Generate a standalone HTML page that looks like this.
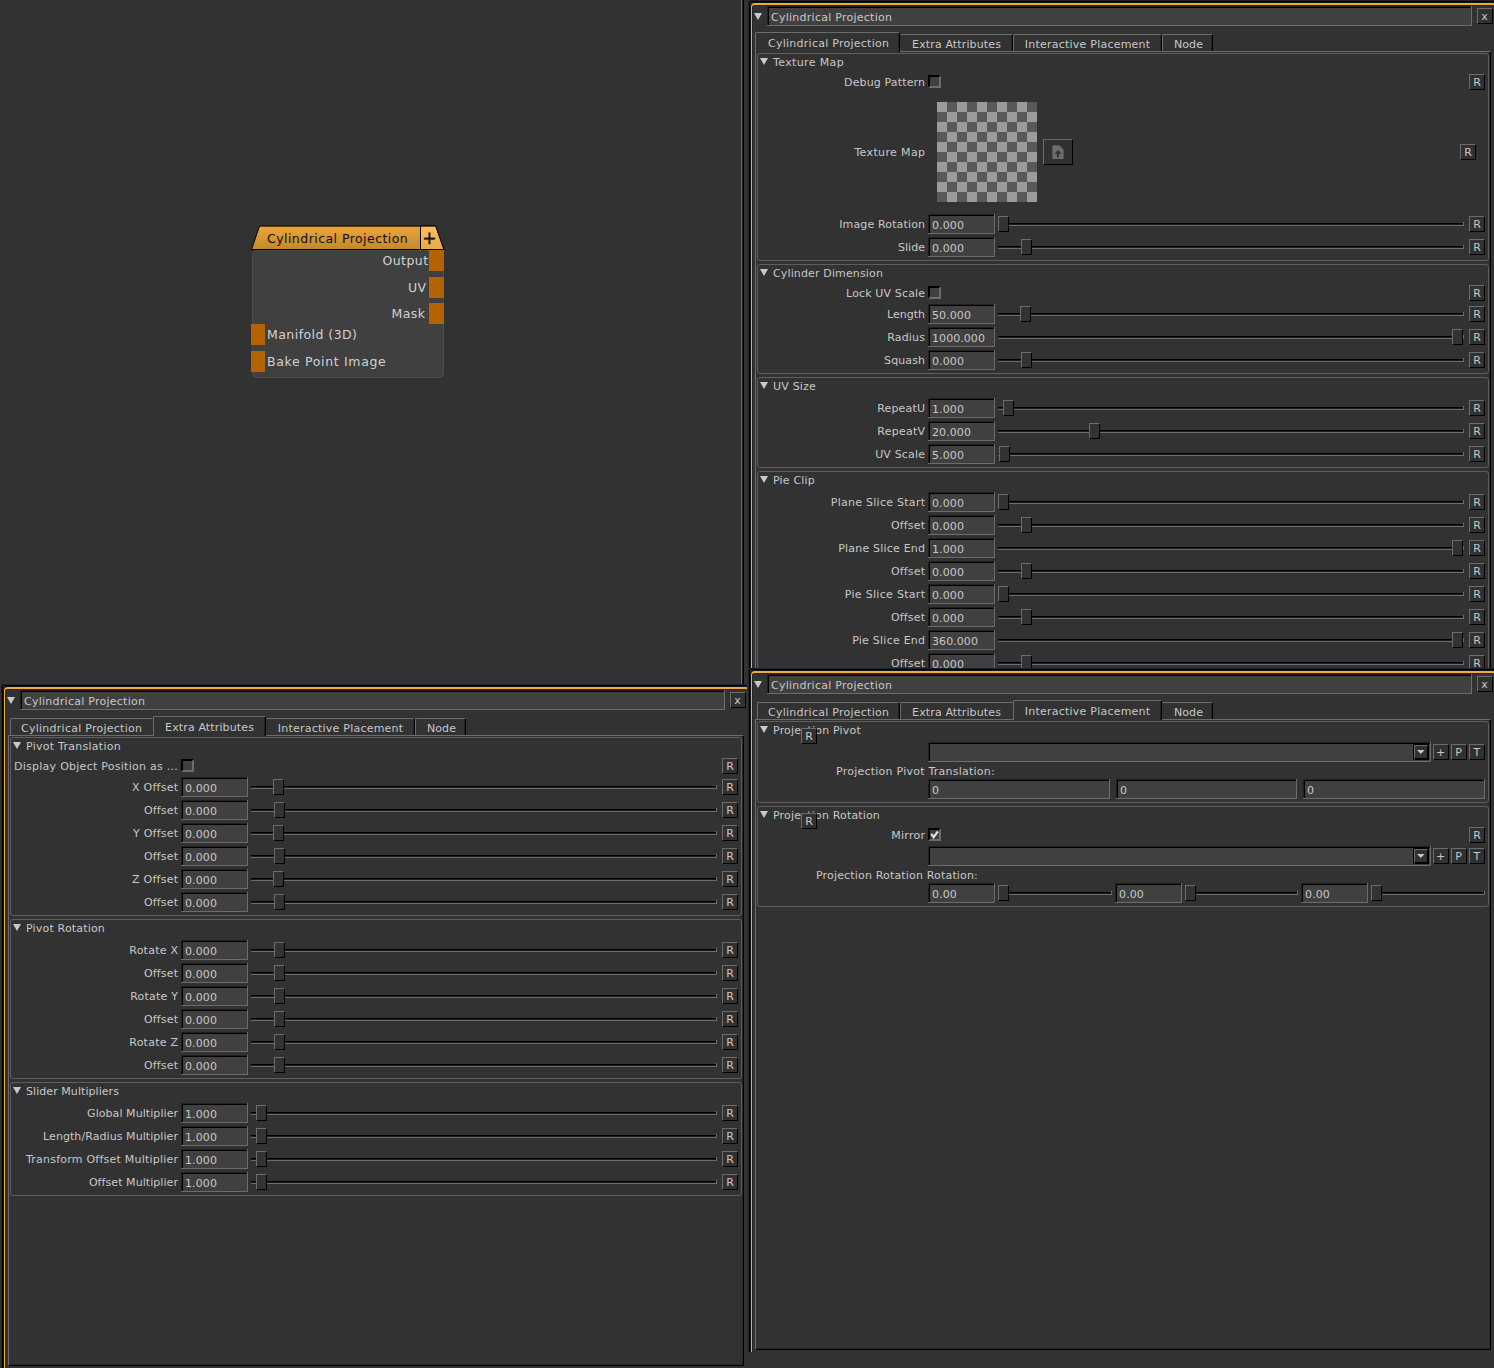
<!DOCTYPE html>
<html><head><meta charset="utf-8"><title>Cylindrical Projection</title>
<style>
html,body{margin:0;padding:0;background:#323232;}
body{width:1494px;height:1368px;position:relative;overflow:hidden;font-family:"DejaVu Sans","Liberation Sans",sans-serif;font-size:11px;color:#c8c8c8;}
div,svg{position:absolute;box-sizing:content-box;}
.t{white-space:nowrap;line-height:14px;height:14px;font-size:11px;color:#c8c8c8;}
.r{width:300px;text-align:right;}
.c{width:300px;text-align:center;}
.vp{overflow:hidden;}
.in{width:760px;height:1400px;}
.cb{width:9px;height:9px;background:#404040;border:2px solid;border-color:#000 #6c6c6c #6c6c6c #000;}
.f{background:#404040;border-top:1px solid #202020;border-left:1px solid #202020;box-shadow:inset 1px 1px 0 0 #000,1px 0 0 0 #6c6c6c,0 1px 0 0 #6c6c6c,1px 1px 0 0 #6c6c6c;}
.b{background:#313131;border-top:1px solid #6c6c6c;border-left:1px solid #6c6c6c;border-right:1px solid #000;border-bottom:1px solid #000;}
.h{width:9px;height:14px;background:#333;border-top:1px solid #6c6c6c;border-left:1px solid #6c6c6c;border-right:1px solid #000;border-bottom:1px solid #000;}

.g{border:1px solid #5e5e5e;border-radius:3px;}
.frameo{border:1px solid #000;border-radius:2px;box-shadow:0 0 0 1px #212121;}
.frame{border:solid #f3a93b;border-width:2px 1px 1px 1px;border-radius:4px;background:#323232;box-shadow:0 0 0 1px #10141c, inset 0 0 0 1px #23272f;}
.pane{border-top:1px solid #6c6c6c;border-left:1px solid #6c6c6c;border-right:1px solid #000;border-bottom:1px solid #000;box-shadow:inset -1px -1px 0 0 #272727;}
.tab{background:#323232;border-top:1px solid #6c6c6c;border-left:1px solid #6c6c6c;border-right:1px solid #000;border-radius:2px 2px 0 0;box-shadow:inset -1px 0 0 #242424;}
.tab.nl{border-left-color:transparent;border-top-left-radius:0;}
.tab.nr{border-right-color:transparent;box-shadow:none;border-top-right-radius:0;}
.tab.act{border-bottom:none;}
.nt{white-space:nowrap;line-height:16px;height:16px;font-size:12.5px;letter-spacing:0.45px;color:#d2d2d2;}
</style></head><body>

<div style="left:741px;top:0px;width:1px;height:684px;background:#6c6c6c;"></div>
<div style="left:742px;top:0px;width:1px;height:684px;background:#1a1a1a;"></div>
<div style="left:743px;top:0px;width:1px;height:684px;background:#000;"></div>
<svg style="left:245px;top:220px" width="210" height="165" viewBox="245 220 210 165"><defs><linearGradient id="ng" x1="0" y1="0" x2="0" y2="1"><stop offset="0" stop-color="#eaa63c"/><stop offset="1" stop-color="#c2892e"/></linearGradient><linearGradient id="ng2" x1="0" y1="0" x2="0" y2="1"><stop offset="0" stop-color="#fdc05a"/><stop offset="1" stop-color="#e6a94c"/></linearGradient></defs><rect x="252.5" y="250.5" width="191" height="127" rx="4" fill="#404040" stroke="#4b4b4b"/><path d="M251.5 249.5L259.5 226.1H435.6L443.9 249.5Z" fill="url(#ng)" stroke="#000" stroke-width="1"/><path d="M420.5 226.1H435.6L443.9 249.5H420.5Z" fill="url(#ng2)" stroke="#000" stroke-width="1"/></svg>
<div style="left:429.4px;top:250px;width:14.4px;height:21px;background:#b56200;"></div>
<div style="left:429.4px;top:277px;width:14.4px;height:21px;background:#b56200;"></div>
<div style="left:429.4px;top:303px;width:14.4px;height:21px;background:#b56200;"></div>
<div style="left:251px;top:324px;width:14px;height:21px;background:#b56200;"></div>
<div style="left:251px;top:351px;width:14px;height:21px;background:#b56200;"></div>
<div class="nt" style="left:267px;top:230.5px;color:#140c00;">Cylindrical Projection</div>
<div class="nt" style="left:422.3px;top:227.8px;font-size:17px;line-height:20px;height:20px;letter-spacing:0;color:#111;-webkit-text-stroke:0.45px #111">+</div>
<div class="nt r" style="left:128.5px;top:253px;">Output</div>
<div class="nt r" style="left:126.5px;top:280px;">UV</div>
<div class="nt r" style="left:125.5px;top:306px;">Mask</div>
<div class="nt" style="left:267px;top:327px;">Manifold (3D)</div>
<div class="nt" style="left:267px;top:354px;color:#d2d2d2;letter-spacing:0.66px;">Bake Point Image</div>
<div class="vp" style="left:748px;top:0px;width:746px;height:668px"><div class="in" style="left:-748px;top:0px">
<div class="frameo" style="left:749px;top:1px;width:747px;height:1400px"></div>
<div class="frame" style="left:751px;top:3px;width:743px;height:1400px"></div>
<svg style="left:754px;top:13px" width="8" height="7" viewBox="0 0 8 7"><path d="M0 0H8L4.0 7Z" fill="#c9c9c9"/></svg>
<div class="f" style="left:767px;top:6px;width:703px;height:18px"></div>
<div class="t" style="left:771px;top:11px;letter-spacing:0.256px;">Cylindrical Projection</div>
<div class="b" style="left:1477px;top:8px;width:14px;height:14px"></div>
<div class="t c" style="left:1334.745px;top:10px;letter-spacing:0.49px;">x</div>
<div class="pane" style="left:755px;top:51px;width:734px;height:700px"></div>
<div class="tab act" style="left:755px;top:32px;width:143px;height:19px"></div>
<div class="t c" style="left:678.628px;top:37px;letter-spacing:0.256px;">Cylindrical Projection</div>
<div class="tab nl" style="left:900px;top:34px;width:111px;height:16px"></div>
<div class="t c" style="left:806.5675px;top:38px;letter-spacing:0.135px;">Extra Attributes</div>
<div class="tab" style="left:1013px;top:34px;width:147px;height:16px"></div>
<div class="t c" style="left:937.613px;top:38px;letter-spacing:0.226px;">Interactive Placement</div>
<div class="tab" style="left:1162px;top:34px;width:49px;height:16px"></div>
<div class="t c" style="left:1038.5365px;top:38px;letter-spacing:0.073px;">Node</div>
<div class="g" style="left:757px;top:53px;width:730px;height:206px"></div>
<svg style="left:760px;top:58px" width="8" height="7" viewBox="0 0 8 7"><path d="M0 0H8L4.0 7Z" fill="#c9c9c9"/></svg>
<div class="t" style="left:773px;top:56px;letter-spacing:0.364px;">Texture Map</div>
<div class="t r" style="left:625.135px;top:76px;letter-spacing:0.135px;">Debug Pattern</div>
<div class="cb" style="left:928px;top:75px"></div>
<div class="b" style="left:1469px;top:74px;width:14px;height:14px"></div>
<div class="t c" style="left:1327.1785px;top:76px;letter-spacing:0.357px;">R</div>
<div class="t r" style="left:625.364px;top:146px;letter-spacing:0.364px;">Texture Map</div>
<div style="left:937px;top:102px;width:100px;height:100px;background-color:#9b9b9b;background-image:conic-gradient(#595959 25%,#9b9b9b 0 50%,#595959 0 75%,#9b9b9b 0);background-size:20px 20px;background-position:0 0"></div>
<div class="b" style="left:1043px;top:139px;width:28px;height:24px"></div>
<svg style="left:1052px;top:145px" width="12" height="14" viewBox="0 0 12 14"><path d="M1.4 0.2H7.2L11.6 4.5V13.2Q11.6 14 10.8 14H1.2Q0.4 14 0.4 13.2V1Q0.4 0.2 1.4 0.2Z" fill="#6d6d6d"/><path d="M6 5L2.4 8.8H4.9V12.2H7.1V8.8H9.6Z" fill="#333"/></svg>
<div class="b" style="left:1460px;top:144px;width:14px;height:14px"></div>
<div class="t c" style="left:1318.1785px;top:146px;letter-spacing:0.357px;">R</div>
<div class="t r" style="left:625.146px;top:218px;letter-spacing:0.146px;">Image Rotation</div>
<div class="f" style="left:928px;top:214px;width:65px;height:18px"></div>
<div class="t" style="left:932px;top:219px;letter-spacing:0.102px;">0.000</div>
<div style="left:998px;top:223px;width:466px;height:1px;background:#000;"></div>
<div style="left:998px;top:224px;width:466px;height:1px;background:#1c1c1c;"></div>
<div style="left:998px;top:225px;width:466px;height:1px;background:#6c6c6c;"></div>
<div style="left:1463px;top:222px;width:1px;height:4px;background:#6c6c6c;"></div>
<div class="h" style="left:998px;top:216px"></div>
<div class="b" style="left:1469px;top:216px;width:14px;height:14px"></div>
<div class="t c" style="left:1327.1785px;top:218px;letter-spacing:0.357px;">R</div>
<div class="t r" style="left:625.031px;top:241px;letter-spacing:0.031px;">Slide</div>
<div class="f" style="left:928px;top:237px;width:65px;height:18px"></div>
<div class="t" style="left:932px;top:242px;letter-spacing:0.102px;">0.000</div>
<div style="left:998px;top:246px;width:466px;height:1px;background:#000;"></div>
<div style="left:998px;top:247px;width:466px;height:1px;background:#1c1c1c;"></div>
<div style="left:998px;top:248px;width:466px;height:1px;background:#6c6c6c;"></div>
<div style="left:1463px;top:245px;width:1px;height:4px;background:#6c6c6c;"></div>
<div class="h" style="left:1021px;top:239px"></div>
<div class="b" style="left:1469px;top:239px;width:14px;height:14px"></div>
<div class="t c" style="left:1327.1785px;top:241px;letter-spacing:0.357px;">R</div>
<div class="g" style="left:757px;top:264px;width:730px;height:108px"></div>
<svg style="left:760px;top:269px" width="8" height="7" viewBox="0 0 8 7"><path d="M0 0H8L4.0 7Z" fill="#c9c9c9"/></svg>
<div class="t" style="left:773px;top:267px;letter-spacing:0.138px;">Cylinder Dimension</div>
<div class="t r" style="left:625.135px;top:287px;letter-spacing:0.135px;">Lock UV Scale</div>
<div class="cb" style="left:928px;top:286px"></div>
<div class="b" style="left:1469px;top:285px;width:14px;height:14px"></div>
<div class="t c" style="left:1327.1785px;top:287px;letter-spacing:0.357px;">R</div>
<div class="t r" style="left:625.01px;top:308px;letter-spacing:0.01px;">Length</div>
<div class="f" style="left:928px;top:304px;width:65px;height:18px"></div>
<div class="t" style="left:932px;top:309px;letter-spacing:0.085px;">50.000</div>
<div style="left:998px;top:313px;width:466px;height:1px;background:#000;"></div>
<div style="left:998px;top:314px;width:466px;height:1px;background:#1c1c1c;"></div>
<div style="left:998px;top:315px;width:466px;height:1px;background:#6c6c6c;"></div>
<div style="left:1463px;top:312px;width:1px;height:4px;background:#6c6c6c;"></div>
<div class="h" style="left:1020px;top:306px"></div>
<div class="b" style="left:1469px;top:306px;width:14px;height:14px"></div>
<div class="t c" style="left:1327.1785px;top:308px;letter-spacing:0.357px;">R</div>
<div class="t r" style="left:625.186px;top:331px;letter-spacing:0.186px;">Radius</div>
<div class="f" style="left:928px;top:327px;width:65px;height:18px"></div>
<div class="t" style="left:932px;top:332px;letter-spacing:0.064px;">1000.000</div>
<div style="left:998px;top:336px;width:466px;height:1px;background:#000;"></div>
<div style="left:998px;top:337px;width:466px;height:1px;background:#1c1c1c;"></div>
<div style="left:998px;top:338px;width:466px;height:1px;background:#6c6c6c;"></div>
<div style="left:1463px;top:335px;width:1px;height:4px;background:#6c6c6c;"></div>
<div class="h" style="left:1452px;top:329px"></div>
<div class="b" style="left:1469px;top:329px;width:14px;height:14px"></div>
<div class="t c" style="left:1327.1785px;top:331px;letter-spacing:0.357px;">R</div>
<div class="t r" style="left:625.103px;top:354px;letter-spacing:0.103px;">Squash</div>
<div class="f" style="left:928px;top:350px;width:65px;height:18px"></div>
<div class="t" style="left:932px;top:355px;letter-spacing:0.102px;">0.000</div>
<div style="left:998px;top:359px;width:466px;height:1px;background:#000;"></div>
<div style="left:998px;top:360px;width:466px;height:1px;background:#1c1c1c;"></div>
<div style="left:998px;top:361px;width:466px;height:1px;background:#6c6c6c;"></div>
<div style="left:1463px;top:358px;width:1px;height:4px;background:#6c6c6c;"></div>
<div class="h" style="left:1021px;top:352px"></div>
<div class="b" style="left:1469px;top:352px;width:14px;height:14px"></div>
<div class="t c" style="left:1327.1785px;top:354px;letter-spacing:0.357px;">R</div>
<div class="g" style="left:757px;top:377px;width:730px;height:89px"></div>
<svg style="left:760px;top:382px" width="8" height="7" viewBox="0 0 8 7"><path d="M0 0H8L4.0 7Z" fill="#c9c9c9"/></svg>
<div class="t" style="left:773px;top:380px;letter-spacing:0.192px;">UV Size</div>
<div class="t r" style="left:625.175px;top:402px;letter-spacing:0.175px;">RepeatU</div>
<div class="f" style="left:928px;top:398px;width:65px;height:18px"></div>
<div class="t" style="left:932px;top:403px;letter-spacing:0.102px;">1.000</div>
<div style="left:998px;top:407px;width:466px;height:1px;background:#000;"></div>
<div style="left:998px;top:408px;width:466px;height:1px;background:#1c1c1c;"></div>
<div style="left:998px;top:409px;width:466px;height:1px;background:#6c6c6c;"></div>
<div style="left:1463px;top:406px;width:1px;height:4px;background:#6c6c6c;"></div>
<div class="h" style="left:1003px;top:400px"></div>
<div class="b" style="left:1469px;top:400px;width:14px;height:14px"></div>
<div class="t c" style="left:1327.1785px;top:402px;letter-spacing:0.357px;">R</div>
<div class="t r" style="left:625.251px;top:425px;letter-spacing:0.251px;">RepeatV</div>
<div class="f" style="left:928px;top:421px;width:65px;height:18px"></div>
<div class="t" style="left:932px;top:426px;letter-spacing:0.085px;">20.000</div>
<div style="left:998px;top:430px;width:466px;height:1px;background:#000;"></div>
<div style="left:998px;top:431px;width:466px;height:1px;background:#1c1c1c;"></div>
<div style="left:998px;top:432px;width:466px;height:1px;background:#6c6c6c;"></div>
<div style="left:1463px;top:429px;width:1px;height:4px;background:#6c6c6c;"></div>
<div class="h" style="left:1089px;top:423px"></div>
<div class="b" style="left:1469px;top:423px;width:14px;height:14px"></div>
<div class="t c" style="left:1327.1785px;top:425px;letter-spacing:0.357px;">R</div>
<div class="t r" style="left:625.167px;top:448px;letter-spacing:0.167px;">UV Scale</div>
<div class="f" style="left:928px;top:444px;width:65px;height:18px"></div>
<div class="t" style="left:932px;top:449px;letter-spacing:0.102px;">5.000</div>
<div style="left:998px;top:453px;width:466px;height:1px;background:#000;"></div>
<div style="left:998px;top:454px;width:466px;height:1px;background:#1c1c1c;"></div>
<div style="left:998px;top:455px;width:466px;height:1px;background:#6c6c6c;"></div>
<div style="left:1463px;top:452px;width:1px;height:4px;background:#6c6c6c;"></div>
<div class="h" style="left:999px;top:446px"></div>
<div class="b" style="left:1469px;top:446px;width:14px;height:14px"></div>
<div class="t c" style="left:1327.1785px;top:448px;letter-spacing:0.357px;">R</div>
<div class="g" style="left:757px;top:471px;width:730px;height:228px"></div>
<svg style="left:760px;top:476px" width="8" height="7" viewBox="0 0 8 7"><path d="M0 0H8L4.0 7Z" fill="#c9c9c9"/></svg>
<div class="t" style="left:773px;top:474px;letter-spacing:0.189px;">Pie Clip</div>
<div class="t r" style="left:625.268px;top:496px;letter-spacing:0.268px;">Plane Slice Start</div>
<div class="f" style="left:928px;top:492px;width:65px;height:18px"></div>
<div class="t" style="left:932px;top:497px;letter-spacing:0.102px;">0.000</div>
<div style="left:998px;top:501px;width:466px;height:1px;background:#000;"></div>
<div style="left:998px;top:502px;width:466px;height:1px;background:#1c1c1c;"></div>
<div style="left:998px;top:503px;width:466px;height:1px;background:#6c6c6c;"></div>
<div style="left:1463px;top:500px;width:1px;height:4px;background:#6c6c6c;"></div>
<div class="h" style="left:998px;top:494px"></div>
<div class="b" style="left:1469px;top:494px;width:14px;height:14px"></div>
<div class="t c" style="left:1327.1785px;top:496px;letter-spacing:0.357px;">R</div>
<div class="t r" style="left:625.159px;top:519px;letter-spacing:0.159px;">Offset</div>
<div class="f" style="left:928px;top:515px;width:65px;height:18px"></div>
<div class="t" style="left:932px;top:520px;letter-spacing:0.102px;">0.000</div>
<div style="left:998px;top:524px;width:466px;height:1px;background:#000;"></div>
<div style="left:998px;top:525px;width:466px;height:1px;background:#1c1c1c;"></div>
<div style="left:998px;top:526px;width:466px;height:1px;background:#6c6c6c;"></div>
<div style="left:1463px;top:523px;width:1px;height:4px;background:#6c6c6c;"></div>
<div class="h" style="left:1021px;top:517px"></div>
<div class="b" style="left:1469px;top:517px;width:14px;height:14px"></div>
<div class="t c" style="left:1327.1785px;top:519px;letter-spacing:0.357px;">R</div>
<div class="t r" style="left:625.202px;top:542px;letter-spacing:0.202px;">Plane Slice End</div>
<div class="f" style="left:928px;top:538px;width:65px;height:18px"></div>
<div class="t" style="left:932px;top:543px;letter-spacing:0.102px;">1.000</div>
<div style="left:998px;top:547px;width:466px;height:1px;background:#000;"></div>
<div style="left:998px;top:548px;width:466px;height:1px;background:#1c1c1c;"></div>
<div style="left:998px;top:549px;width:466px;height:1px;background:#6c6c6c;"></div>
<div style="left:1463px;top:546px;width:1px;height:4px;background:#6c6c6c;"></div>
<div class="h" style="left:1452px;top:540px"></div>
<div class="b" style="left:1469px;top:540px;width:14px;height:14px"></div>
<div class="t c" style="left:1327.1785px;top:542px;letter-spacing:0.357px;">R</div>
<div class="t r" style="left:625.159px;top:565px;letter-spacing:0.159px;">Offset</div>
<div class="f" style="left:928px;top:561px;width:65px;height:18px"></div>
<div class="t" style="left:932px;top:566px;letter-spacing:0.102px;">0.000</div>
<div style="left:998px;top:570px;width:466px;height:1px;background:#000;"></div>
<div style="left:998px;top:571px;width:466px;height:1px;background:#1c1c1c;"></div>
<div style="left:998px;top:572px;width:466px;height:1px;background:#6c6c6c;"></div>
<div style="left:1463px;top:569px;width:1px;height:4px;background:#6c6c6c;"></div>
<div class="h" style="left:1021px;top:563px"></div>
<div class="b" style="left:1469px;top:563px;width:14px;height:14px"></div>
<div class="t c" style="left:1327.1785px;top:565px;letter-spacing:0.357px;">R</div>
<div class="t r" style="left:625.301px;top:588px;letter-spacing:0.301px;">Pie Slice Start</div>
<div class="f" style="left:928px;top:584px;width:65px;height:18px"></div>
<div class="t" style="left:932px;top:589px;letter-spacing:0.102px;">0.000</div>
<div style="left:998px;top:593px;width:466px;height:1px;background:#000;"></div>
<div style="left:998px;top:594px;width:466px;height:1px;background:#1c1c1c;"></div>
<div style="left:998px;top:595px;width:466px;height:1px;background:#6c6c6c;"></div>
<div style="left:1463px;top:592px;width:1px;height:4px;background:#6c6c6c;"></div>
<div class="h" style="left:998px;top:586px"></div>
<div class="b" style="left:1469px;top:586px;width:14px;height:14px"></div>
<div class="t c" style="left:1327.1785px;top:588px;letter-spacing:0.357px;">R</div>
<div class="t r" style="left:625.159px;top:611px;letter-spacing:0.159px;">Offset</div>
<div class="f" style="left:928px;top:607px;width:65px;height:18px"></div>
<div class="t" style="left:932px;top:612px;letter-spacing:0.102px;">0.000</div>
<div style="left:998px;top:616px;width:466px;height:1px;background:#000;"></div>
<div style="left:998px;top:617px;width:466px;height:1px;background:#1c1c1c;"></div>
<div style="left:998px;top:618px;width:466px;height:1px;background:#6c6c6c;"></div>
<div style="left:1463px;top:615px;width:1px;height:4px;background:#6c6c6c;"></div>
<div class="h" style="left:1021px;top:609px"></div>
<div class="b" style="left:1469px;top:609px;width:14px;height:14px"></div>
<div class="t c" style="left:1327.1785px;top:611px;letter-spacing:0.357px;">R</div>
<div class="t r" style="left:625.229px;top:634px;letter-spacing:0.229px;">Pie Slice End</div>
<div class="f" style="left:928px;top:630px;width:65px;height:18px"></div>
<div class="t" style="left:932px;top:635px;letter-spacing:0.073px;">360.000</div>
<div style="left:998px;top:639px;width:466px;height:1px;background:#000;"></div>
<div style="left:998px;top:640px;width:466px;height:1px;background:#1c1c1c;"></div>
<div style="left:998px;top:641px;width:466px;height:1px;background:#6c6c6c;"></div>
<div style="left:1463px;top:638px;width:1px;height:4px;background:#6c6c6c;"></div>
<div class="h" style="left:1452px;top:632px"></div>
<div class="b" style="left:1469px;top:632px;width:14px;height:14px"></div>
<div class="t c" style="left:1327.1785px;top:634px;letter-spacing:0.357px;">R</div>
<div class="t r" style="left:625.159px;top:657px;letter-spacing:0.159px;">Offset</div>
<div class="f" style="left:928px;top:653px;width:65px;height:18px"></div>
<div class="t" style="left:932px;top:658px;letter-spacing:0.102px;">0.000</div>
<div style="left:998px;top:662px;width:466px;height:1px;background:#000;"></div>
<div style="left:998px;top:663px;width:466px;height:1px;background:#1c1c1c;"></div>
<div style="left:998px;top:664px;width:466px;height:1px;background:#6c6c6c;"></div>
<div style="left:1463px;top:661px;width:1px;height:4px;background:#6c6c6c;"></div>
<div class="h" style="left:1021px;top:655px"></div>
<div class="b" style="left:1469px;top:655px;width:14px;height:14px"></div>
<div class="t c" style="left:1327.1785px;top:657px;letter-spacing:0.357px;">R</div>
</div></div>
<div class="vp" style="left:748px;top:668px;width:746px;height:684px"><div class="in" style="left:-748px;top:0px">
<div class="frameo" style="left:749px;top:1px;width:747px;height:1400px"></div>
<div class="frame" style="left:751px;top:3px;width:743px;height:1400px"></div>
<svg style="left:754px;top:13px" width="8" height="7" viewBox="0 0 8 7"><path d="M0 0H8L4.0 7Z" fill="#c9c9c9"/></svg>
<div class="f" style="left:767px;top:6px;width:703px;height:18px"></div>
<div class="t" style="left:771px;top:11px;letter-spacing:0.256px;">Cylindrical Projection</div>
<div class="b" style="left:1477px;top:8px;width:14px;height:14px"></div>
<div class="t c" style="left:1334.745px;top:10px;letter-spacing:0.49px;">x</div>
<div class="pane" style="left:755px;top:51px;width:734px;height:629px"></div>
<div class="tab" style="left:757px;top:34px;width:141px;height:16px"></div>
<div class="t c" style="left:678.628px;top:38px;letter-spacing:0.256px;">Cylindrical Projection</div>
<div class="tab nr" style="left:900px;top:34px;width:111px;height:16px"></div>
<div class="t c" style="left:806.5675px;top:38px;letter-spacing:0.135px;">Extra Attributes</div>
<div class="tab act" style="left:1013px;top:32px;width:147px;height:19px"></div>
<div class="t c" style="left:937.613px;top:37px;letter-spacing:0.226px;">Interactive Placement</div>
<div class="tab nl" style="left:1162px;top:34px;width:49px;height:16px"></div>
<div class="t c" style="left:1038.5365px;top:38px;letter-spacing:0.073px;">Node</div>
<div class="g" style="left:757px;top:53px;width:730px;height:80px"></div>
<svg style="left:760px;top:58px" width="8" height="7" viewBox="0 0 8 7"><path d="M0 0H8L4.0 7Z" fill="#c9c9c9"/></svg>
<div class="t" style="left:773px;top:56px;letter-spacing:0.194px;">Projection Pivot</div>
<div class="b" style="left:801px;top:60px;width:14px;height:14px"></div>
<div class="t c" style="left:659.1785px;top:62px;letter-spacing:0.357px;">R</div>
<div class="f" style="left:928px;top:74px;width:501px;height:18px"></div>
<div style="left:1413px;top:76px;width:16px;height:16px;background:#000;"></div>
<div class="b" style="left:1414px;top:77px;width:12px;height:12px"></div>
<svg style="left:1417px;top:82px" width="7.6" height="4" viewBox="0 0 7.6 4"><path d="M0 0H7.6L3.8 4Z" fill="#c9c9c9"/></svg>
<div class="b" style="left:1433px;top:76px;width:14px;height:14px"></div>
<div class="t c" style="left:1290.3915px;top:78px;letter-spacing:-0.217px;">+</div>
<div class="b" style="left:1451px;top:76px;width:14px;height:14px"></div>
<div class="t c" style="left:1308.6835px;top:78px;letter-spacing:0.367px;">P</div>
<div class="b" style="left:1469px;top:76px;width:14px;height:14px"></div>
<div class="t c" style="left:1327.1405px;top:78px;letter-spacing:0.281px;">T</div>
<div class="t" style="left:836px;top:97px;letter-spacing:0.24px;">Projection Pivot Translation:</div>
<div class="f" style="left:928px;top:111px;width:180px;height:18px"></div>
<div class="t" style="left:932px;top:116px;letter-spacing:0.001px;">0</div>
<div class="f" style="left:1116px;top:111px;width:179px;height:18px"></div>
<div class="t" style="left:1120px;top:116px;letter-spacing:0.001px;">0</div>
<div class="f" style="left:1303px;top:111px;width:180px;height:18px"></div>
<div class="t" style="left:1307px;top:116px;letter-spacing:0.001px;">0</div>
<div class="g" style="left:757px;top:138px;width:730px;height:99px"></div>
<svg style="left:760px;top:143px" width="8" height="7" viewBox="0 0 8 7"><path d="M0 0H8L4.0 7Z" fill="#c9c9c9"/></svg>
<div class="t" style="left:773px;top:141px;letter-spacing:0.164px;">Projection Rotation</div>
<div class="b" style="left:801px;top:145px;width:14px;height:14px"></div>
<div class="t c" style="left:659.1785px;top:147px;letter-spacing:0.357px;">R</div>
<div class="t r" style="left:625.265px;top:161px;letter-spacing:0.265px;">Mirror</div>
<div class="cb" style="left:928px;top:160px"></div>
<svg style="left:929px;top:161px" width="11" height="11" viewBox="0 0 11 11"><path d="M2.3 4.9L4.6 8.1L8.9 2.5" fill="none" stroke="#e2e2e2" stroke-width="2.2"/></svg>
<div class="b" style="left:1469px;top:159px;width:14px;height:14px"></div>
<div class="t c" style="left:1327.1785px;top:161px;letter-spacing:0.357px;">R</div>
<div class="f" style="left:928px;top:178px;width:501px;height:18px"></div>
<div style="left:1413px;top:180px;width:16px;height:16px;background:#000;"></div>
<div class="b" style="left:1414px;top:181px;width:12px;height:12px"></div>
<svg style="left:1417px;top:186px" width="7.6" height="4" viewBox="0 0 7.6 4"><path d="M0 0H7.6L3.8 4Z" fill="#c9c9c9"/></svg>
<div class="b" style="left:1433px;top:180px;width:14px;height:14px"></div>
<div class="t c" style="left:1290.3915px;top:182px;letter-spacing:-0.217px;">+</div>
<div class="b" style="left:1451px;top:180px;width:14px;height:14px"></div>
<div class="t c" style="left:1308.6835px;top:182px;letter-spacing:0.367px;">P</div>
<div class="b" style="left:1469px;top:180px;width:14px;height:14px"></div>
<div class="t c" style="left:1327.1405px;top:182px;letter-spacing:0.281px;">T</div>
<div class="t" style="left:816px;top:201px;letter-spacing:0.169px;">Projection Rotation Rotation:</div>
<div class="f" style="left:928px;top:215px;width:65px;height:18px"></div>
<div class="t" style="left:932px;top:220px;letter-spacing:0.127px;">0.00</div>
<div style="left:998px;top:224px;width:114px;height:1px;background:#000;"></div>
<div style="left:998px;top:225px;width:114px;height:1px;background:#1c1c1c;"></div>
<div style="left:998px;top:226px;width:114px;height:1px;background:#6c6c6c;"></div>
<div style="left:1111px;top:223px;width:1px;height:4px;background:#6c6c6c;"></div>
<div class="h" style="left:998px;top:217px"></div>
<div class="f" style="left:1115px;top:215px;width:65px;height:18px"></div>
<div class="t" style="left:1119px;top:220px;letter-spacing:0.127px;">0.00</div>
<div style="left:1185px;top:224px;width:113px;height:1px;background:#000;"></div>
<div style="left:1185px;top:225px;width:113px;height:1px;background:#1c1c1c;"></div>
<div style="left:1185px;top:226px;width:113px;height:1px;background:#6c6c6c;"></div>
<div style="left:1297px;top:223px;width:1px;height:4px;background:#6c6c6c;"></div>
<div class="h" style="left:1185px;top:217px"></div>
<div class="f" style="left:1301px;top:215px;width:65px;height:18px"></div>
<div class="t" style="left:1305px;top:220px;letter-spacing:0.127px;">0.00</div>
<div style="left:1371px;top:224px;width:114px;height:1px;background:#000;"></div>
<div style="left:1371px;top:225px;width:114px;height:1px;background:#1c1c1c;"></div>
<div style="left:1371px;top:226px;width:114px;height:1px;background:#6c6c6c;"></div>
<div style="left:1484px;top:223px;width:1px;height:4px;background:#6c6c6c;"></div>
<div class="h" style="left:1371px;top:217px"></div>
</div></div>
<div class="vp" style="left:1px;top:684px;width:746px;height:684px"><div class="in" style="left:-748px;top:0px">
<div class="frameo" style="left:749px;top:1px;width:747px;height:1400px"></div>
<div class="frame" style="left:751px;top:3px;width:743px;height:1400px"></div>
<svg style="left:754px;top:13px" width="8" height="7" viewBox="0 0 8 7"><path d="M0 0H8L4.0 7Z" fill="#c9c9c9"/></svg>
<div class="f" style="left:767px;top:6px;width:703px;height:18px"></div>
<div class="t" style="left:771px;top:11px;letter-spacing:0.256px;">Cylindrical Projection</div>
<div class="b" style="left:1477px;top:8px;width:14px;height:14px"></div>
<div class="t c" style="left:1334.745px;top:10px;letter-spacing:0.49px;">x</div>
<div class="pane" style="left:755px;top:51px;width:734px;height:629px"></div>
<div class="tab nr" style="left:757px;top:34px;width:141px;height:16px"></div>
<div class="t c" style="left:678.628px;top:38px;letter-spacing:0.256px;">Cylindrical Projection</div>
<div class="tab act" style="left:900px;top:32px;width:111px;height:19px"></div>
<div class="t c" style="left:806.5675px;top:37px;letter-spacing:0.135px;">Extra Attributes</div>
<div class="tab nl" style="left:1013px;top:34px;width:147px;height:16px"></div>
<div class="t c" style="left:937.613px;top:38px;letter-spacing:0.226px;">Interactive Placement</div>
<div class="tab" style="left:1162px;top:34px;width:49px;height:16px"></div>
<div class="t c" style="left:1038.5365px;top:38px;letter-spacing:0.073px;">Node</div>
<div class="g" style="left:757px;top:53px;width:730px;height:177px"></div>
<svg style="left:760px;top:58px" width="8" height="7" viewBox="0 0 8 7"><path d="M0 0H8L4.0 7Z" fill="#c9c9c9"/></svg>
<div class="t" style="left:773px;top:56px;letter-spacing:0.268px;">Pivot Translation</div>
<div class="t" style="left:761px;top:76px;letter-spacing:0.262px;">Display Object Position as ...</div>
<div class="cb" style="left:928px;top:75px"></div>
<div class="b" style="left:1469px;top:74px;width:14px;height:14px"></div>
<div class="t c" style="left:1327.1785px;top:76px;letter-spacing:0.357px;">R</div>
<div class="t r" style="left:625.24px;top:97px;letter-spacing:0.24px;">X Offset</div>
<div class="f" style="left:928px;top:93px;width:65px;height:18px"></div>
<div class="t" style="left:932px;top:98px;letter-spacing:0.102px;">0.000</div>
<div style="left:998px;top:102px;width:466px;height:1px;background:#000;"></div>
<div style="left:998px;top:103px;width:466px;height:1px;background:#1c1c1c;"></div>
<div style="left:998px;top:104px;width:466px;height:1px;background:#6c6c6c;"></div>
<div style="left:1463px;top:101px;width:1px;height:4px;background:#6c6c6c;"></div>
<div class="h" style="left:1020px;top:95px"></div>
<div class="b" style="left:1469px;top:95px;width:14px;height:14px"></div>
<div class="t c" style="left:1327.1785px;top:97px;letter-spacing:0.357px;">R</div>
<div class="t r" style="left:625.159px;top:120px;letter-spacing:0.159px;">Offset</div>
<div class="f" style="left:928px;top:116px;width:65px;height:18px"></div>
<div class="t" style="left:932px;top:121px;letter-spacing:0.102px;">0.000</div>
<div style="left:998px;top:125px;width:466px;height:1px;background:#000;"></div>
<div style="left:998px;top:126px;width:466px;height:1px;background:#1c1c1c;"></div>
<div style="left:998px;top:127px;width:466px;height:1px;background:#6c6c6c;"></div>
<div style="left:1463px;top:124px;width:1px;height:4px;background:#6c6c6c;"></div>
<div class="h" style="left:1021px;top:118px"></div>
<div class="b" style="left:1469px;top:118px;width:14px;height:14px"></div>
<div class="t c" style="left:1327.1785px;top:120px;letter-spacing:0.357px;">R</div>
<div class="t r" style="left:625.217px;top:143px;letter-spacing:0.217px;">Y Offset</div>
<div class="f" style="left:928px;top:139px;width:65px;height:18px"></div>
<div class="t" style="left:932px;top:144px;letter-spacing:0.102px;">0.000</div>
<div style="left:998px;top:148px;width:466px;height:1px;background:#000;"></div>
<div style="left:998px;top:149px;width:466px;height:1px;background:#1c1c1c;"></div>
<div style="left:998px;top:150px;width:466px;height:1px;background:#6c6c6c;"></div>
<div style="left:1463px;top:147px;width:1px;height:4px;background:#6c6c6c;"></div>
<div class="h" style="left:1020px;top:141px"></div>
<div class="b" style="left:1469px;top:141px;width:14px;height:14px"></div>
<div class="t c" style="left:1327.1785px;top:143px;letter-spacing:0.357px;">R</div>
<div class="t r" style="left:625.159px;top:166px;letter-spacing:0.159px;">Offset</div>
<div class="f" style="left:928px;top:162px;width:65px;height:18px"></div>
<div class="t" style="left:932px;top:167px;letter-spacing:0.102px;">0.000</div>
<div style="left:998px;top:171px;width:466px;height:1px;background:#000;"></div>
<div style="left:998px;top:172px;width:466px;height:1px;background:#1c1c1c;"></div>
<div style="left:998px;top:173px;width:466px;height:1px;background:#6c6c6c;"></div>
<div style="left:1463px;top:170px;width:1px;height:4px;background:#6c6c6c;"></div>
<div class="h" style="left:1021px;top:164px"></div>
<div class="b" style="left:1469px;top:164px;width:14px;height:14px"></div>
<div class="t c" style="left:1327.1785px;top:166px;letter-spacing:0.357px;">R</div>
<div class="t r" style="left:625.24px;top:189px;letter-spacing:0.24px;">Z Offset</div>
<div class="f" style="left:928px;top:185px;width:65px;height:18px"></div>
<div class="t" style="left:932px;top:190px;letter-spacing:0.102px;">0.000</div>
<div style="left:998px;top:194px;width:466px;height:1px;background:#000;"></div>
<div style="left:998px;top:195px;width:466px;height:1px;background:#1c1c1c;"></div>
<div style="left:998px;top:196px;width:466px;height:1px;background:#6c6c6c;"></div>
<div style="left:1463px;top:193px;width:1px;height:4px;background:#6c6c6c;"></div>
<div class="h" style="left:1020px;top:187px"></div>
<div class="b" style="left:1469px;top:187px;width:14px;height:14px"></div>
<div class="t c" style="left:1327.1785px;top:189px;letter-spacing:0.357px;">R</div>
<div class="t r" style="left:625.159px;top:212px;letter-spacing:0.159px;">Offset</div>
<div class="f" style="left:928px;top:208px;width:65px;height:18px"></div>
<div class="t" style="left:932px;top:213px;letter-spacing:0.102px;">0.000</div>
<div style="left:998px;top:217px;width:466px;height:1px;background:#000;"></div>
<div style="left:998px;top:218px;width:466px;height:1px;background:#1c1c1c;"></div>
<div style="left:998px;top:219px;width:466px;height:1px;background:#6c6c6c;"></div>
<div style="left:1463px;top:216px;width:1px;height:4px;background:#6c6c6c;"></div>
<div class="h" style="left:1021px;top:210px"></div>
<div class="b" style="left:1469px;top:210px;width:14px;height:14px"></div>
<div class="t c" style="left:1327.1785px;top:212px;letter-spacing:0.357px;">R</div>
<div class="g" style="left:757px;top:235px;width:730px;height:158px"></div>
<svg style="left:760px;top:240px" width="8" height="7" viewBox="0 0 8 7"><path d="M0 0H8L4.0 7Z" fill="#c9c9c9"/></svg>
<div class="t" style="left:773px;top:238px;letter-spacing:0.179px;">Pivot Rotation</div>
<div class="t r" style="left:625.244px;top:260px;letter-spacing:0.244px;">Rotate X</div>
<div class="f" style="left:928px;top:256px;width:65px;height:18px"></div>
<div class="t" style="left:932px;top:261px;letter-spacing:0.102px;">0.000</div>
<div style="left:998px;top:265px;width:466px;height:1px;background:#000;"></div>
<div style="left:998px;top:266px;width:466px;height:1px;background:#1c1c1c;"></div>
<div style="left:998px;top:267px;width:466px;height:1px;background:#6c6c6c;"></div>
<div style="left:1463px;top:264px;width:1px;height:4px;background:#6c6c6c;"></div>
<div class="h" style="left:1021px;top:258px"></div>
<div class="b" style="left:1469px;top:258px;width:14px;height:14px"></div>
<div class="t c" style="left:1327.1785px;top:260px;letter-spacing:0.357px;">R</div>
<div class="t r" style="left:625.159px;top:283px;letter-spacing:0.159px;">Offset</div>
<div class="f" style="left:928px;top:279px;width:65px;height:18px"></div>
<div class="t" style="left:932px;top:284px;letter-spacing:0.102px;">0.000</div>
<div style="left:998px;top:288px;width:466px;height:1px;background:#000;"></div>
<div style="left:998px;top:289px;width:466px;height:1px;background:#1c1c1c;"></div>
<div style="left:998px;top:290px;width:466px;height:1px;background:#6c6c6c;"></div>
<div style="left:1463px;top:287px;width:1px;height:4px;background:#6c6c6c;"></div>
<div class="h" style="left:1021px;top:281px"></div>
<div class="b" style="left:1469px;top:281px;width:14px;height:14px"></div>
<div class="t c" style="left:1327.1785px;top:283px;letter-spacing:0.357px;">R</div>
<div class="t r" style="left:625.221px;top:306px;letter-spacing:0.221px;">Rotate Y</div>
<div class="f" style="left:928px;top:302px;width:65px;height:18px"></div>
<div class="t" style="left:932px;top:307px;letter-spacing:0.102px;">0.000</div>
<div style="left:998px;top:311px;width:466px;height:1px;background:#000;"></div>
<div style="left:998px;top:312px;width:466px;height:1px;background:#1c1c1c;"></div>
<div style="left:998px;top:313px;width:466px;height:1px;background:#6c6c6c;"></div>
<div style="left:1463px;top:310px;width:1px;height:4px;background:#6c6c6c;"></div>
<div class="h" style="left:1021px;top:304px"></div>
<div class="b" style="left:1469px;top:304px;width:14px;height:14px"></div>
<div class="t c" style="left:1327.1785px;top:306px;letter-spacing:0.357px;">R</div>
<div class="t r" style="left:625.159px;top:329px;letter-spacing:0.159px;">Offset</div>
<div class="f" style="left:928px;top:325px;width:65px;height:18px"></div>
<div class="t" style="left:932px;top:330px;letter-spacing:0.102px;">0.000</div>
<div style="left:998px;top:334px;width:466px;height:1px;background:#000;"></div>
<div style="left:998px;top:335px;width:466px;height:1px;background:#1c1c1c;"></div>
<div style="left:998px;top:336px;width:466px;height:1px;background:#6c6c6c;"></div>
<div style="left:1463px;top:333px;width:1px;height:4px;background:#6c6c6c;"></div>
<div class="h" style="left:1021px;top:327px"></div>
<div class="b" style="left:1469px;top:327px;width:14px;height:14px"></div>
<div class="t c" style="left:1327.1785px;top:329px;letter-spacing:0.357px;">R</div>
<div class="t r" style="left:625.244px;top:352px;letter-spacing:0.244px;">Rotate Z</div>
<div class="f" style="left:928px;top:348px;width:65px;height:18px"></div>
<div class="t" style="left:932px;top:353px;letter-spacing:0.102px;">0.000</div>
<div style="left:998px;top:357px;width:466px;height:1px;background:#000;"></div>
<div style="left:998px;top:358px;width:466px;height:1px;background:#1c1c1c;"></div>
<div style="left:998px;top:359px;width:466px;height:1px;background:#6c6c6c;"></div>
<div style="left:1463px;top:356px;width:1px;height:4px;background:#6c6c6c;"></div>
<div class="h" style="left:1021px;top:350px"></div>
<div class="b" style="left:1469px;top:350px;width:14px;height:14px"></div>
<div class="t c" style="left:1327.1785px;top:352px;letter-spacing:0.357px;">R</div>
<div class="t r" style="left:625.159px;top:375px;letter-spacing:0.159px;">Offset</div>
<div class="f" style="left:928px;top:371px;width:65px;height:18px"></div>
<div class="t" style="left:932px;top:376px;letter-spacing:0.102px;">0.000</div>
<div style="left:998px;top:380px;width:466px;height:1px;background:#000;"></div>
<div style="left:998px;top:381px;width:466px;height:1px;background:#1c1c1c;"></div>
<div style="left:998px;top:382px;width:466px;height:1px;background:#6c6c6c;"></div>
<div style="left:1463px;top:379px;width:1px;height:4px;background:#6c6c6c;"></div>
<div class="h" style="left:1021px;top:373px"></div>
<div class="b" style="left:1469px;top:373px;width:14px;height:14px"></div>
<div class="t c" style="left:1327.1785px;top:375px;letter-spacing:0.357px;">R</div>
<div class="g" style="left:757px;top:398px;width:730px;height:112px"></div>
<svg style="left:760px;top:403px" width="8" height="7" viewBox="0 0 8 7"><path d="M0 0H8L4.0 7Z" fill="#c9c9c9"/></svg>
<div class="t" style="left:773px;top:401px;letter-spacing:0.063px;">Slider Multipliers</div>
<div class="t r" style="left:625.067px;top:423px;letter-spacing:0.067px;">Global Multiplier</div>
<div class="f" style="left:928px;top:419px;width:65px;height:18px"></div>
<div class="t" style="left:932px;top:424px;letter-spacing:0.102px;">1.000</div>
<div style="left:998px;top:428px;width:466px;height:1px;background:#000;"></div>
<div style="left:998px;top:429px;width:466px;height:1px;background:#1c1c1c;"></div>
<div style="left:998px;top:430px;width:466px;height:1px;background:#6c6c6c;"></div>
<div style="left:1463px;top:427px;width:1px;height:4px;background:#6c6c6c;"></div>
<div class="h" style="left:1003px;top:421px"></div>
<div class="b" style="left:1469px;top:421px;width:14px;height:14px"></div>
<div class="t c" style="left:1327.1785px;top:423px;letter-spacing:0.357px;">R</div>
<div class="t r" style="left:625.071px;top:446px;letter-spacing:0.071px;">Length/Radius Multiplier</div>
<div class="f" style="left:928px;top:442px;width:65px;height:18px"></div>
<div class="t" style="left:932px;top:447px;letter-spacing:0.102px;">1.000</div>
<div style="left:998px;top:451px;width:466px;height:1px;background:#000;"></div>
<div style="left:998px;top:452px;width:466px;height:1px;background:#1c1c1c;"></div>
<div style="left:998px;top:453px;width:466px;height:1px;background:#6c6c6c;"></div>
<div style="left:1463px;top:450px;width:1px;height:4px;background:#6c6c6c;"></div>
<div class="h" style="left:1003px;top:444px"></div>
<div class="b" style="left:1469px;top:444px;width:14px;height:14px"></div>
<div class="t c" style="left:1327.1785px;top:446px;letter-spacing:0.357px;">R</div>
<div class="t r" style="left:625.221px;top:469px;letter-spacing:0.221px;">Transform Offset Multiplier</div>
<div class="f" style="left:928px;top:465px;width:65px;height:18px"></div>
<div class="t" style="left:932px;top:470px;letter-spacing:0.102px;">1.000</div>
<div style="left:998px;top:474px;width:466px;height:1px;background:#000;"></div>
<div style="left:998px;top:475px;width:466px;height:1px;background:#1c1c1c;"></div>
<div style="left:998px;top:476px;width:466px;height:1px;background:#6c6c6c;"></div>
<div style="left:1463px;top:473px;width:1px;height:4px;background:#6c6c6c;"></div>
<div class="h" style="left:1003px;top:467px"></div>
<div class="b" style="left:1469px;top:467px;width:14px;height:14px"></div>
<div class="t c" style="left:1327.1785px;top:469px;letter-spacing:0.357px;">R</div>
<div class="t r" style="left:625.07px;top:492px;letter-spacing:0.07px;">Offset Multiplier</div>
<div class="f" style="left:928px;top:488px;width:65px;height:18px"></div>
<div class="t" style="left:932px;top:493px;letter-spacing:0.102px;">1.000</div>
<div style="left:998px;top:497px;width:466px;height:1px;background:#000;"></div>
<div style="left:998px;top:498px;width:466px;height:1px;background:#1c1c1c;"></div>
<div style="left:998px;top:499px;width:466px;height:1px;background:#6c6c6c;"></div>
<div style="left:1463px;top:496px;width:1px;height:4px;background:#6c6c6c;"></div>
<div class="h" style="left:1003px;top:490px"></div>
<div class="b" style="left:1469px;top:490px;width:14px;height:14px"></div>
<div class="t c" style="left:1327.1785px;top:492px;letter-spacing:0.357px;">R</div>
</div></div>
</body></html>
